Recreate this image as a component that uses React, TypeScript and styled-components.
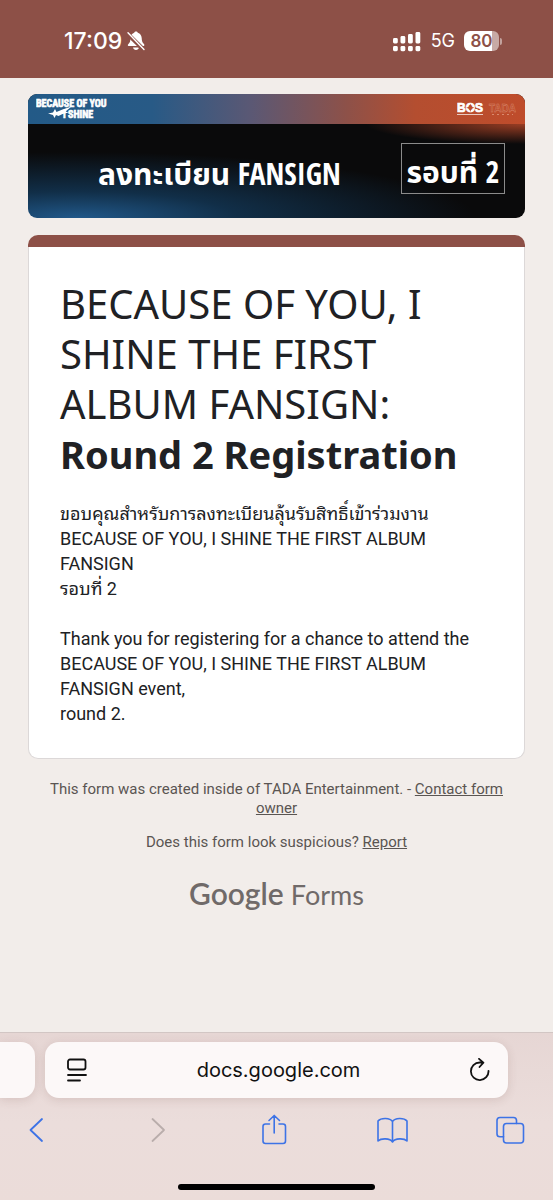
import React from "react";
import styled, { createGlobalStyle, css } from "styled-components";

const GlobalStyle = createGlobalStyle`
  *, *::before, *::after { box-sizing: border-box; }
  body { margin: 0; background: #f2edea; }
  button { border: 0; padding: 0; background: none; font: inherit; color: inherit; cursor: pointer; }
  svg { display: block; }
`;

const fonts = {
  body: `Roboto, "Noto Sans Thai Looped", Loma, Garuda, Waree, "Noto Sans Thai", "Noto Sans", sans-serif`,
  title: `"Noto Sans", sans-serif`,
  system: `Inter, "Liberation Sans", sans-serif`,
  banner: `"Open Sans Condensed", "Roboto Condensed", "Noto Sans Thai", "Noto Sans", sans-serif`,
  logo: `Lato, sans-serif`,
};

const Screen = styled.div`
  min-height: 100vh;
  display: flex;
  flex-direction: column;
  background: #f2edea;
  font-family: ${fonts.body};
  color: #202124;
`;

const StatusBar = styled.header`
  height: 78px;
  padding: 4px 51px 0 64px;
  display: flex;
  align-items: center;
  justify-content: space-between;
  background: #8d5047;
  color: #fff;
  font-family: ${fonts.system};
`;

const StatusGroup = styled.div<{ $gap: number }>`
  display: flex;
  align-items: center;
  gap: ${(p) => p.$gap}px;
`;

const Clock = styled.time`
  font-size: 23px;
  font-weight: 500;
  line-height: 28px;
`;

const Network = styled.span`
  font-size: 18px;
  font-weight: 400;
  line-height: 24px;
`;

const Battery = styled.div`
  display: flex;
  align-items: center;
  gap: 1px;

  &::after {
    content: "";
    width: 2px;
    height: 7px;
    border-radius: 0 2px 2px 0;
    background: #c2a29d;
  }
`;

const BatteryBody = styled.span`
  width: 35px;
  height: 20px;
  border-radius: 6px;
  background: linear-gradient(90deg, #fff 80%, #c8aaa5 80%);
  color: #8d5047;
  font-size: 17px;
  font-weight: 600;
  line-height: 20px;
  text-align: center;
`;

const Page = styled.main`
  flex: 1;
  padding: 16px 28px 32px;
  display: flex;
  flex-direction: column;
`;

const Banner = styled.section`
  border-radius: 9px;
  overflow: hidden;
  color: #fff;
  background:
    radial-gradient(ellipse 32% 20px at 100% 30px, rgba(190, 74, 42, 0.8), transparent),
    radial-gradient(ellipse 80% 66px at 10% 100%, rgba(34, 92, 144, 0.95), rgba(20, 62, 98, 0.7) 40%, transparent),
    #0a0a0b;
`;

const BannerStrip = styled.div`
  height: 30px;
  padding: 4px 6px 0 8px;
  display: flex;
  justify-content: space-between;
  background: linear-gradient(90deg, #235a87 0%, #285a86 25%, #5b5874 45%, #8d5149 64%, #b44e30 78%, #bf4c2b 100%);
`;

const BannerBody = styled.div`
  height: 94px;
  padding: 5px 20px 0 70px;
  display: flex;
  align-items: center;
  justify-content: space-between;
  font-family: ${fonts.banner};
  font-weight: 700;
  font-size: 30px;
  line-height: 40px;
  white-space: nowrap;
`;

const bannerHeading = css`
  margin: 0;
  font: inherit;
`;

const BannerTitle = styled.h2`
  ${bannerHeading}
`;

const RoundBox = styled.p`
  ${bannerHeading}
  width: 104px;
  height: 51px;
  padding-top: 8px;
  margin-bottom: 10px;
  border: 1px solid #8b8b8b;
  text-align: center;
`;

const Card = styled.article`
  margin-top: 17px;
`;

const CardAccent = styled.div`
  height: 12px;
  border-radius: 10px 10px 0 0;
  background: #8d5047;
`;

const CardBody = styled.div`
  padding: 32px 31px;
  border: 1px solid #dcd8d8;
  border-top: 0;
  border-radius: 0 0 10px 10px;
  background: #fff;
`;

const Title = styled.h1`
  margin: 0 0 22px;
  font-family: ${fonts.title};
  font-size: 40px;
  font-weight: 400;
  line-height: 50px;

  strong { font-size: 38px; font-weight: 700; display: block; }
`;

const Description = styled.p`
  margin: 0;
  font-size: 18px;
  line-height: 25px;
  white-space: pre-line;
`;

const Footer = styled.footer`
  padding-top: 21px;
  display: flex;
  flex-direction: column;
  align-items: center;
  gap: 15px;
  color: #5a5552;
  font-size: 15px;
  line-height: 19px;
  text-align: center;
`;

const Note = styled.p`
  margin: 0;
  padding: 0 16px;
`;

const NoteLink = styled.a`
  color: inherit;
  text-decoration: underline;
`;

const FormsLogo = styled.a`
  margin-top: 8px;
  display: flex;
  align-items: baseline;
  gap: 7px;
  color: #706a69;
  font-family: ${fonts.logo};
  font-size: 27px;
  line-height: 36px;
  text-decoration: none;

  b { font-weight: 600; font-size: 30px; }
`;

const BrowserBar = styled.footer`
  height: 168px;
  padding-top: 9px;
  display: flex;
  flex-direction: column;
  border-top: 1px solid #d2c6c4;
  background: linear-gradient(180deg, #e6d6d4 0, #ebdddb 90px, #ebdcd9 100%);
`;

const TabStrip = styled.div`
  display: flex;
  gap: 10px;
  padding-right: 45px;
`;

const tabSurface = css`
  height: 56px;
  background: #fcf8f8;
  box-shadow: 0 2px 10px rgba(110, 70, 65, 0.16);
`;

const NeighbourTab = styled.div`
  ${tabSurface}
  width: 35px;
  border-radius: 0 14px 14px 0;
`;

const AddressBar = styled.div`
  ${tabSurface}
  flex: 1;
  padding: 0 16px 0 20px;
  display: flex;
  align-items: center;
  justify-content: space-between;
  border-radius: 14px;
  color: #111;
`;

const Address = styled.button`
  font-family: ${fonts.system};
  font-size: 20px;
  line-height: 28px;
`;

const Toolbar = styled.nav`
  padding: 16px 27px 0 20px;
  display: flex;
  justify-content: space-between;
`;

const ToolButton = styled.button`
  width: 32px;
  height: 32px;
  color: #3d73e6;

  &:disabled { color: #b9adab; }
`;

const HomeIndicator = styled.div`
  width: 197px;
  height: 6px;
  margin: auto auto 10px;
  border-radius: 3px;
  background: #000;
`;

const Stroke = ({ size = 32, width = 1.6, children }: { size?: number; width?: number; children: React.ReactNode }) => (
  <svg width={size} height={size} viewBox={`0 0 ${size} ${size}`} fill="none" stroke="currentColor"
    strokeWidth={width} strokeLinecap="round" strokeLinejoin="round" aria-hidden="true">
    {children}
  </svg>
);

const BellOff = () => (
  <svg width="18" height="20" viewBox="0 0 18 20" aria-hidden="true">
    <path d="M9 .6c.9 0 1.5.5 1.8 1.2 2.500.7 3.700 2.700 3.900 5.200.1 3 .6 4.400 2 5.800.6.7.8 1 .6 1.600-.2.500-.6.6-1.200.6H2C1.200 15 .8 14.600.8 14c0-.9 1.600-1.600 2.200-3.300.4-1.200.2-3 .6-4.800.5-2 1.600-3.400 3.600-4.100C7.500 1.100 8.100.6 9 .6zM6 16.500h6c-.3 1.400-1.500 2.400-3 2.400s-2.700-1-3-2.400z" fill="#fff" />
    <path d="M-.5 1.700 17.500 19.500" stroke="#8d5047" strokeWidth="4.200" />
    <path d="M1 1.800 17 18.600" stroke="#fff" strokeWidth="1.400" strokeLinecap="round" />
  </svg>
);

const Signal = () => (
  <svg width="29" height="21" viewBox="0 0 29 21" fill="#fff" aria-hidden="true">
    {[0, 1, 2, 3].map((i) => (
      <React.Fragment key={i}>
        <rect x={i * 7.5} y={[7, 5, 3, 1][i]} width="4.800" height={[5.500, 7.500, 9.500, 11.500][i]} rx="1.400" />
        <rect x={i * 7.5} y="15" width="4.800" height="5.200" rx="1.400" />
      </React.Fragment>
    ))}
  </svg>
);

const AlbumLogo = () => (
  <svg width="76" height="24" viewBox="0 0 76 24" fill="#fff" role="img" aria-label="Because of you I shine">
    <g fontFamily="Roboto Condensed, Open Sans Condensed, Liberation Sans, sans-serif" fontWeight="700" fontSize="10" stroke="#fff" strokeWidth=".6">
      <text x="0" y="9">BECAUSE OF YOU</text>
      <text x="27" y="20">I SHINE</text>
    </g>
    <path d="M12 15.500l5-1 2-3.500 1.500 3 6-2.500 9-3-6 5 3 1-6 1.500-4 2-2.500-1-1.500 3-1.500-3z" />
  </svg>
);

const BosLogo = () => (
  <svg width="62" height="20" viewBox="0 0 62 20" role="img" aria-label="BOS TADA">
    <text x="0" y="14" fill="#fff" stroke="#fff" strokeWidth=".7" fontFamily="Liberation Sans, sans-serif" fontWeight="700" fontSize="12">BOS</text>
    <path d="M13.300 5.500l1 3.200 3.200 1-3.200 1-1 3.200-1-3.200-3.200-1 3.200-1z" fill="#bf4c2b" />
    <path d="M0 16.500h26" stroke="#fff" strokeOpacity=".7" strokeWidth="1" />
    <text x="32" y="14" fill="none" stroke="#d98a6e" strokeWidth=".4" fontFamily="Liberation Sans, sans-serif" fontWeight="700" fontSize="10">TADA</text>
    <path d="M35 16.500h21" stroke="#d98a6e" strokeDasharray="2 3" />
  </svg>
);

export default function App() {
  return (
    <Screen>
      <GlobalStyle />
      <StatusBar>
        <StatusGroup $gap={5}>
          <Clock>17:09</Clock>
          <BellOff />
        </StatusGroup>
        <StatusGroup $gap={9}>
          <Signal />
          <Network>5G</Network>
          <Battery><BatteryBody>80</BatteryBody></Battery>
        </StatusGroup>
      </StatusBar>

      <Page>
        <Banner>
          <BannerStrip>
            <AlbumLogo />
            <BosLogo />
          </BannerStrip>
          <BannerBody>
            <BannerTitle>ลงทะเบียน FANSIGN</BannerTitle>
            <RoundBox>รอบที่ 2</RoundBox>
          </BannerBody>
        </Banner>

        <Card>
          <CardAccent />
          <CardBody>
            <Title>
              BECAUSE OF YOU, I SHINE THE FIRST ALBUM FANSIGN: <strong>Round 2 Registration</strong>
            </Title>
            <Description>
              {`ขอบคุณสำหรับการลงทะเบียนลุ้นรับสิทธิ์เข้าร่วมงาน BECAUSE OF YOU, I SHINE THE FIRST ALBUM FANSIGN
รอบที่ 2

Thank you for registering for a chance to attend the BECAUSE OF YOU, I SHINE THE FIRST ALBUM FANSIGN event,
round 2.`}
            </Description>
          </CardBody>
        </Card>

        <Footer>
          <Note>
            This form was created inside of TADA Entertainment. - <NoteLink href="#contact">Contact form owner</NoteLink>
          </Note>
          <Note>
            Does this form look suspicious? <NoteLink href="#report">Report</NoteLink>
          </Note>
          <FormsLogo href="#forms"><b>Google</b> <span>Forms</span></FormsLogo>
        </Footer>
      </Page>

      <BrowserBar>
        <TabStrip>
          <NeighbourTab />
          <AddressBar>
            <button aria-label="Page menu">
              <Stroke size={24} width={1.800}>
                <rect x="3" y="1.500" width="17.500" height="10" rx="2" />
                <path d="M3 17h18M3 22.500h12" />
              </Stroke>
            </button>
            <Address>docs.google.com</Address>
            <button aria-label="Reload">
              <Stroke size={24} width={1.800}>
                <path d="M20.500 12.800A8.800 8.800 0 1 1 11.700 4.500H15M11 .8 15.400 4.700 11.500 9" />
              </Stroke>
            </button>
          </AddressBar>
        </TabStrip>
        <Toolbar>
          <ToolButton aria-label="Back"><Stroke width={1.800}><path d="M22 5 10.500 16 22 27" /></Stroke></ToolButton>
          <ToolButton aria-label="Forward" disabled><Stroke width={1.800}><path d="M13.500 5 25 16 13.500 27" /></Stroke></ToolButton>
          <ToolButton aria-label="Share">
            <Stroke><path d="M12.500 10H8.500Q6 10 6 12.500V27Q6 29.500 8.500 29.500H26Q28.500 29.500 28.500 27V12.500Q28.500 10 26 10H22M17.200 19V1.500M12 6.500 17.200 1.500 22.500 6.500" /></Stroke>
          </ToolButton>
          <ToolButton aria-label="Bookmarks">
            <Stroke><path d="M16.500 7.500C14 3.500 5 3.500 2 7V27C5 24 14 24 16.500 28 19 24 28 24 31 27V7C28 3.500 19 3.500 16.500 7.500V28" /></Stroke>
          </ToolButton>
          <ToolButton aria-label="Tabs">
            <Stroke>
              <rect x="9.500" y="9.500" width="20" height="19.500" rx="3" />
              <path d="M9.500 22.800H6Q3 22.800 3 20V6.500Q3 3.500 6 3.500H19.500Q22.500 3.500 22.500 6.500V9.500" />
            </Stroke>
          </ToolButton>
        </Toolbar>
        <HomeIndicator />
      </BrowserBar>
    </Screen>
  );
}
